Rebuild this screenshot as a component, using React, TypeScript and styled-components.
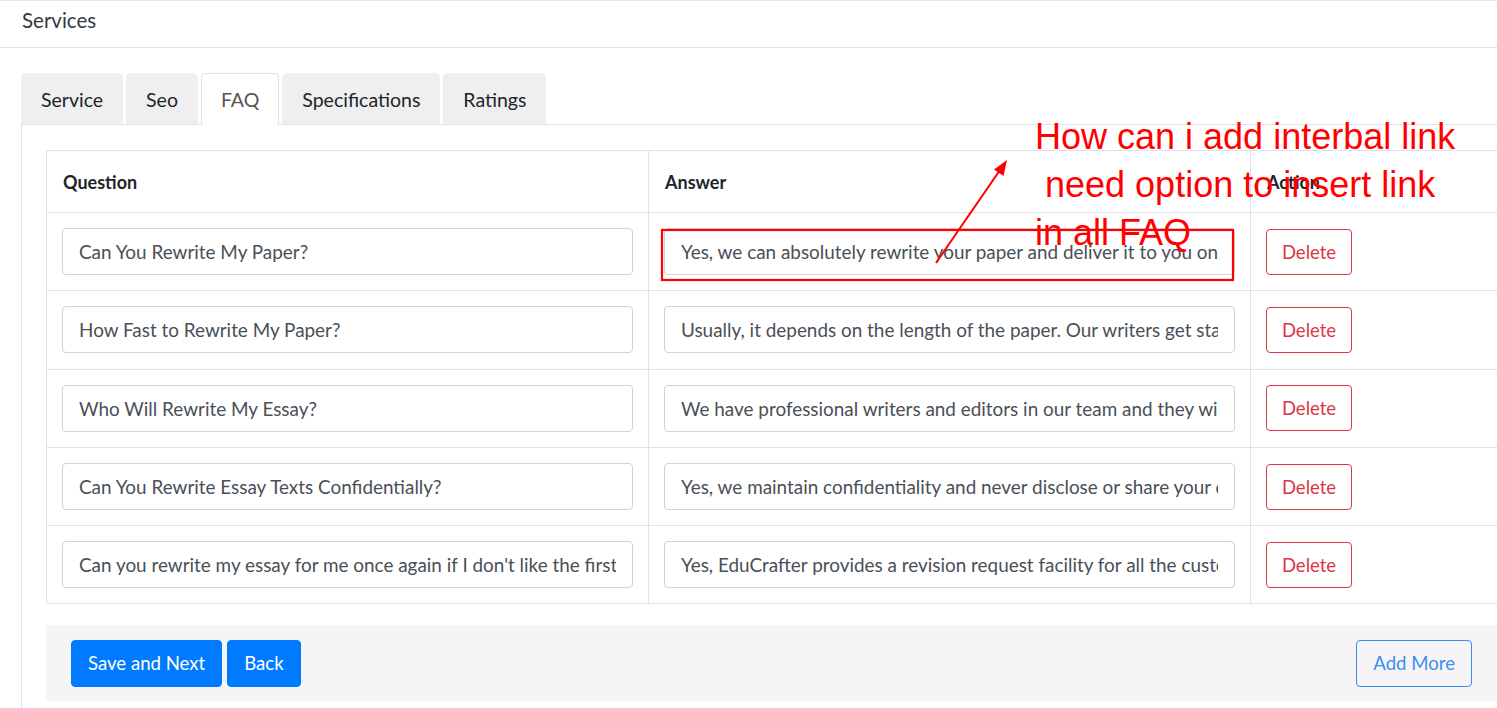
import React from 'react'
import styled, { createGlobalStyle } from 'styled-components'

const GlobalStyle = createGlobalStyle`
  html, body {
    margin: 0;
    padding: 0;
    background: #fff;
    overflow: hidden;
  }
  body {
    font-family: "Source Sans Pro", Lato, "Noto Sans", sans-serif;
    color: #212529;
  }
  * { box-sizing: border-box; }
`

const faqs = [
  {
    q: 'Can You Rewrite My Paper?',
    a: 'Yes, we can absolutely rewrite your paper and deliver it to you on time with quality.',
  },
  {
    q: 'How Fast to Rewrite My Paper?',
    a: 'Usually, it depends on the length of the paper. Our writers get started right away.',
  },
  {
    q: 'Who Will Rewrite My Essay?',
    a: 'We have professional writers and editors in our team and they will rewrite it.',
  },
  {
    q: 'Can You Rewrite Essay Texts Confidentially?',
    a: 'Yes, we maintain confidentiality and never disclose or share your data.',
  },
  {
    q: "Can you rewrite my essay for me once again if I don't like the first version?",
    a: 'Yes, EduCrafter provides a revision request facility for all the customers.',
  },
]

const tabs = ['Service', 'Seo', 'FAQ', 'Specifications', 'Ratings']

export default function App() {
  return (
    <Page>
      <GlobalStyle />
      <Header>Services</Header>
      <Main>
        <TabList>
          {tabs.map((t) => (
            <Tab key={t} active={t === 'FAQ'}>{t}</Tab>
          ))}
        </TabList>
        <Card>
          <Table>
            <colgroup>
              <col style={{ width: 602 }} />
              <col style={{ width: 602 }} />
              <col />
            </colgroup>
            <thead>
              <tr>
                <Th>Question</Th>
                <Th>Answer</Th>
                <Th>Action</Th>
              </tr>
            </thead>
            <tbody>
              {faqs.map((f) => (
                <tr key={f.q}>
                  <Td><Input defaultValue={f.q} /></Td>
                  <Td><Input defaultValue={f.a} /></Td>
                  <Td><DeleteButton>Delete</DeleteButton></Td>
                </tr>
              ))}
            </tbody>
          </Table>
          <Footer>
            <ButtonGroup>
              <PrimaryButton>Save and Next</PrimaryButton>
              <PrimaryButton>Back</PrimaryButton>
            </ButtonGroup>
            <OutlineButton>Add More</OutlineButton>
          </Footer>
        </Card>
      </Main>

      <Markup width="1497" height="708">
        <rect x="662" y="230" width="571" height="50" fill="none" stroke="#ff0000" strokeWidth="2.2" />
        <line x1="936" y1="263" x2="1000" y2="170" stroke="#ff0000" strokeWidth="2" />
        <polygon points="1007,160 1003.5,176 994,169.5" fill="#ff0000" />
      </Markup>
      <Note>
        <NoteLine>How can i add interbal link</NoteLine>
        <NoteLine indent>need option to insert link</NoteLine>
        <NoteLine>in all FAQ</NoteLine>
      </Note>
    </Page>
  )
}

// ~~~~~~~~~~~~~~~~~~~~~~~~~~~~~
// Styles
// ~~~~~~~~~~~~~~~~~~~~~~~~~~~~~
const Page = styled.div`
  position: relative;
  width: 1497px;
  height: 708px;
  overflow: hidden;
`

const Header = styled.div`
  height: 48px;
  border-top: 1px solid #e6e6e6;
  border-bottom: 1px solid #dee2e6;
  padding-left: 22px;
  display: flex;
  align-items: center;
  font-size: 20.5px;
  color: #343a40;
  padding-bottom: 9px;
`

const Main = styled.div`
  padding: 25px 0 0 21px;
`

const TabList = styled.div`
  display: flex;
  gap: 3px;
  height: 51px;
`

const Tab = styled.div<{ active?: boolean }>`
  display: flex;
  align-items: center;
  padding: 0 19px;
  font-size: 19.5px;
  color: ${({ active }) => (active ? '#555' : '#212529')};
  background: ${({ active }) => (active ? '#fff' : '#efefef')};
  border: 1px solid ${({ active }) => (active ? '#dee2e6' : 'transparent')};
  border-bottom: none;
  border-radius: 5px 5px 0 0;
  position: relative;
  z-index: ${({ active }) => (active ? 2 : 1)};
  height: ${({ active }) => (active ? '52px' : '51px')};
`

const Card = styled.div`
  border: 1px solid #dee2e6;
  border-right: none;
  border-radius: 0 0 0 4px;
  padding: 25px 0 30px 24px;
  margin-right: -4px;
`

const Table = styled.table`
  width: 1452px;
  border-collapse: collapse;
  table-layout: fixed;
`

const Th = styled.th`
  text-align: left;
  font-weight: 700;
  font-size: 18px;
  height: 62px;
  padding: 0 16px;
  border: 1px solid #dee2e6;
  color: #212529;
`

const Td = styled.td`
  height: 78.3px;
  padding: 0 15px;
  border: 1px solid #dee2e6;
  vertical-align: middle;
`

const Input = styled.input`
  display: block;
  width: 100%;
  height: 47px;
  padding: 0 16px;
  font-family: inherit;
  font-size: 18.9px;
  color: #495057;
  border: 1px solid #ced4da;
  border-radius: 4px;
  background: #fff;
  outline: none;
`

const DeleteButton = styled.button`
  height: 46px;
  width: 86px;
  padding: 0;
  font-family: inherit;
  font-size: 18.5px;
  color: #dc3545;
  background: #fff;
  border: 1px solid #dc3545;
  border-radius: 4px;
`

const Footer = styled.div`
  margin-top: 21px;
  background: #f5f5f5;
  height: 76px;
  width: 1452px;
  display: flex;
  align-items: center;
  justify-content: space-between;
  padding: 0 26px 0 25px;
`

const ButtonGroup = styled.div`
  display: flex;
  gap: 5px;
`

const PrimaryButton = styled.button`
  height: 47px;
  padding: 0 16px;
  font-family: inherit;
  font-size: 18.6px;
  color: #fff;
  background: #007bff;
  border: 1px solid #007bff;
  border-radius: 4px;
`

const OutlineButton = styled.button`
  height: 47px;
  padding: 0 16px;
  font-family: inherit;
  font-size: 18.6px;
  color: #3b8ef5;
  background: transparent;
  border: 1px solid #3b8ef5;
  border-radius: 4px;
`

const Markup = styled.svg`
  position: absolute;
  left: 0;
  top: 0;
  pointer-events: none;
`

const Note = styled.div`
  position: absolute;
  left: 1035px;
  top: 113px;
  font-family: "Liberation Sans", Arial, sans-serif;
  font-size: 36px;
  line-height: 48px;
  color: #ff0000;
  pointer-events: none;
  white-space: pre;
`

const NoteLine = styled.div<{ indent?: boolean }>`
  padding-left: ${({ indent }) => (indent ? '10px' : '0')};
`
